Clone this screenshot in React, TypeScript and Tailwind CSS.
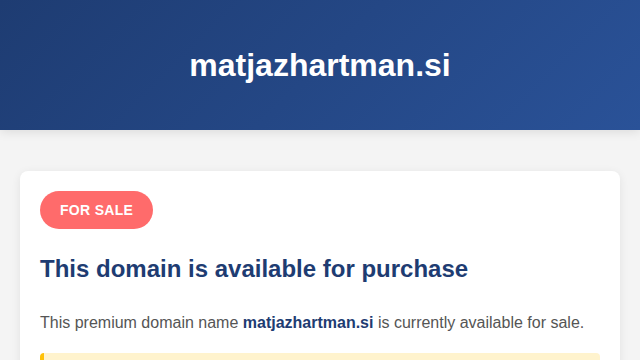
import React from 'react'

const App = () => {
  return (
    <div className="min-h-screen bg-[#f4f4f4] font-['Liberation_Sans',Arial,sans-serif]">
      <header className="h-[130px] flex items-center justify-center bg-[linear-gradient(135deg,#1e3c72_0%,#2a5298_100%)] shadow-[0_2px_10px_rgba(0,0,0,0.1)]">
        <h1 className="text-[32px] leading-[37px] font-bold text-white">matjazhartman.si</h1>
      </header>

      <main className="px-5 pt-[41px] pb-10">
        <div className="bg-white rounded-lg shadow-[0_2px_10px_rgba(0,0,0,0.08)] p-5">
          <span className="inline-block bg-[#ff6b6b] text-white text-[14px] leading-[18px] font-bold uppercase tracking-[0.3px] px-5 py-[10px] rounded-full">
            For Sale
          </span>

          <h2 className="mt-[26px] mb-[27px] text-[24px] leading-[28px] font-bold text-[#1e3c72]">
            This domain is available for purchase
          </h2>

          <p className="text-[16px] leading-[25.6px] text-[#555] mb-[17px]">
            This premium domain name <strong className="text-[#1e3c72]">matjazhartman.si</strong> is currently available for sale.
          </p>

          <div className="bg-[#fff3cd] border-l-4 border-[#ffc107] rounded px-[15px] py-[15px] text-[#856404] text-[15px] leading-[24px]">
            Interested in acquiring this domain? Contact us to make an offer.
          </div>
        </div>
      </main>
    </div>
  )
}

export default App
